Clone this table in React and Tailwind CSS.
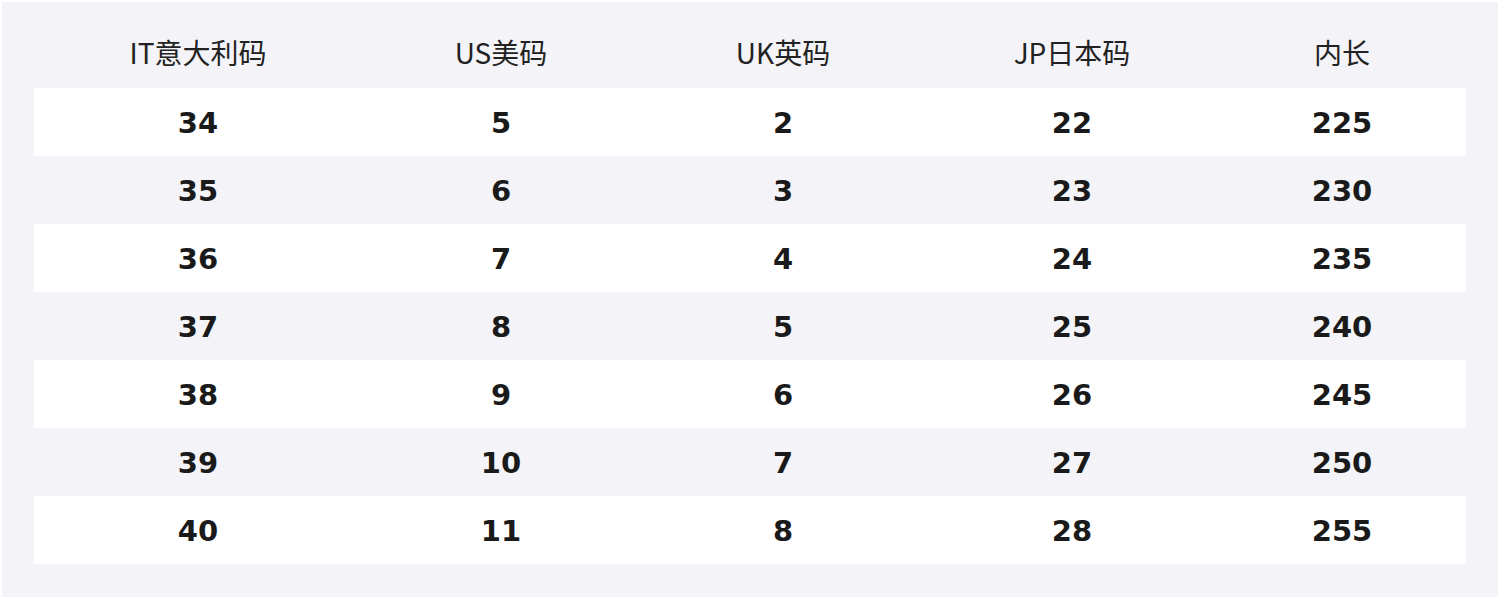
import React from "react";

const headers = ["IT意大利码", "US美码", "UK英码", "JP日本码", "内长"];
const rows = [
  [34, 5, 2, 22, 225],
  [35, 6, 3, 23, 230],
  [36, 7, 4, 24, 235],
  [37, 8, 5, 25, 240],
  [38, 9, 6, 26, 245],
  [39, 10, 7, 27, 250],
  [40, 11, 8, 28, 255],
];

export default function App() {
  return (
    <div className="bg-white p-[2px] w-[1500px] h-[601px]">
      <div className="bg-[#f4f4f8] h-[595px] px-[32px] pb-[33px]">
        <div
          className="grid grid-cols-[328px_278px_286px_292px_248px] h-[86px] pt-[14px] items-center text-[28px] text-[#222222]"
          style={{ fontFamily: '"Noto Sans CJK SC", sans-serif' }}
        >
          {headers.map((h) => (
            <div key={h} className="text-center leading-none">
              {h}
            </div>
          ))}
        </div>
        {rows.map((r, i) => (
          <div
            key={i}
            className={
              "grid grid-cols-[328px_278px_286px_292px_248px] h-[68px] items-center text-[29px] font-bold text-[#1a1a1a] " +
              (i % 2 === 0 ? "bg-white" : "")
            }
            style={{ fontFamily: '"DejaVu Sans", sans-serif' }}
          >
            {r.map((v, j) => (
              <div key={j} className="text-center leading-none pt-[2px]">
                {v}
              </div>
            ))}
          </div>
        ))}
      </div>
    </div>
  );
}
